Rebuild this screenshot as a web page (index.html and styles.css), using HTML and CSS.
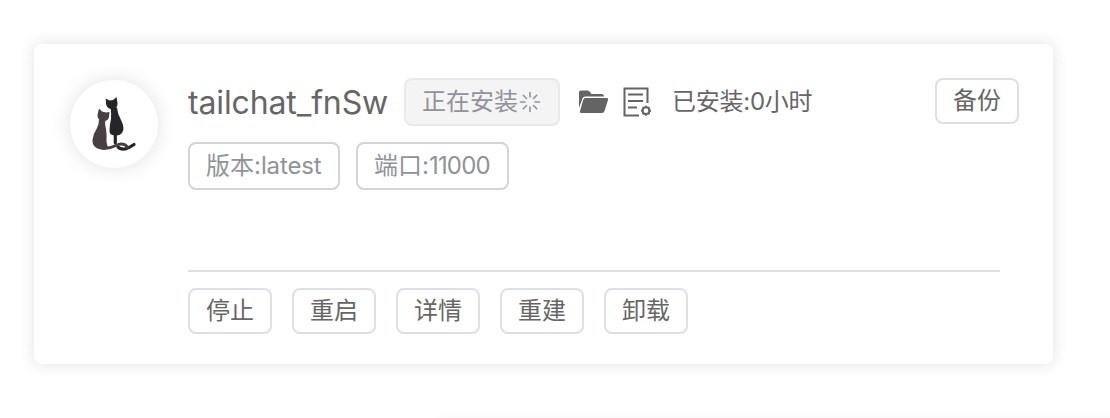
FILE: index.html
```html
<!DOCTYPE html>
<html lang="zh-CN">
<head>
<meta charset="utf-8">
<title>tailchat_fnSw</title>
<link rel="stylesheet" href="styles.css">
</head>
<body>
<main class="page">
  <article class="card">
    <div class="avatar">
      <svg width="48" height="60" viewBox="0 0 48 60">
        <g fill="#24262a">
          <path d="M15.700 4.500L19.500 6.500L23 6L26.500 3L27.500 9Q28 14 23 15Q17 15.500 16 10Z"/>
          <path d="M20.500 13.500L27 13.500Q27.500 20 31 26Q35 34 32.500 38Q30.500 42 24.500 41.500Q19.500 41 19.500 37Q19.500 31 21 25Q21.500 19 20.500 13.500Z"/>
        </g>
        <path d="M25.300 39V49M28 53Q30 55.500 35 55Q39 54 44 50.500" fill="none" stroke="#24262a" stroke-width="3.200" stroke-linecap="round"/>
        <g fill="#493f40">
          <path d="M9 14.500L12 17.500L16 18.500L19.500 18L19 23Q18 27.500 13 27Q7 26 7.500 21Z"/>
          <path d="M9 25L15.500 26Q14.500 29 16 35Q17 41 16.500 48L18 54Q13 57 7.500 54.500Q2 52 2.500 46Q3 40 7 34Q9 30 9 25Z"/>
        </g>
        <path d="M14 54.500Q20 54.500 26 51.500Q33 48 37.500 53" fill="none" stroke="#493f40" stroke-width="3" stroke-linecap="round"/>
      </svg>
    </div>
    <section class="content">
      <header class="head">
        <h1 class="name">tailchat_fnSw</h1>
        <span class="status">正在安装<svg class="spinner" width="22" height="22" viewBox="0 0 22 22" fill="none" stroke="currentColor" stroke-width="1.600" stroke-linecap="round"><path d="M11 1.500V6M11 16V20.500M1.500 11H6M16 11H20.500M4.300 4.300L7.500 7.500M14.500 14.500L17.700 17.700M4.300 17.700L7.500 14.500M14.500 7.500L17.700 4.300"/></svg></span>
        <svg class="folder" width="30" height="26" viewBox="0 0 30 26" fill="#646464"><path d="M0 19V3Q0 1.500 2 1.500H8.500Q10 1.500 11 3L12.500 5H22.500Q25 5 25 7.500H6Q4.200 7.500 3.500 9.500Z"/><path d="M6.500 9H27.500Q29.700 9 29 11L25.500 22Q25 24 23 24H2Q.5 24 1 22L4.200 11Q4.800 9 6.500 9Z"/></svg>
        <svg class="log" width="30" height="30" viewBox="0 0 30 30" fill="none" stroke="#646464" stroke-width="2"><path d="M16 28.500H1.500V1.500H24.500V16M5 7.500H20M5 14H20M5 20.500H14"/><circle cx="23" cy="23.700" r="3.400"/><path stroke-width="2" d="M23 18.700V20M23 27.200V28.700M18 23.700H19.300M26.700 23.700H28M19.500 20.200L20.500 21.200M25.500 26.200L26.500 27.200M19.500 27.200L20.500 26.200M25.500 21.200L26.500 20.200"/></svg>
        <span class="elapsed">已安装:0小时</span>
        <button class="btn backup">备份</button>
      </header>
      <div class="tags">
        <span class="tag version">版本:<span class="latin">latest</span></span>
        <span class="tag port">端口:<span class="digits">11000</span></span>
      </div>
      <footer class="actions">
        <button class="btn">停止</button>
        <button class="btn">重启</button>
        <button class="btn">详情</button>
        <button class="btn">重建</button>
        <button class="btn">卸载</button>
      </footer>
    </section>
  </article>
  <div class="next-card"></div>
</main>
</body>
</html>
```
FILE: styles.css
```css
* { box-sizing: border-box; }
body {
  margin: 0;
  overflow: hidden;
  background: #fff;
  color: #666;
  font: 24px/36px Inter, "Noto Sans CJK SC", sans-serif;
}
.page { height: 418px; padding: 44px 57px 0 34px; overflow: hidden; }
.card {
  display: flex;
  gap: 30px;
  height: 320px;
  padding: 34px 34px 30px 36px;
  border-radius: 8px;
  background: #fff;
  box-shadow: 0 0 16px rgba(0, 0, 0, .12);
}
.avatar {
  display: flex;
  flex: none;
  align-items: center;
  justify-content: center;
  width: 88px;
  height: 88px;
  margin-top: 2px;
  border-radius: 50%;
  box-shadow: 0 0 20px rgba(0, 0, 0, .12);
}
.content { display: flex; flex: 1; flex-direction: column; min-width: 0; }
.head { display: flex; height: 48px; white-space: nowrap; }
.name {
  width: 200px;
  margin: 0 16px 0 0;
  font-size: 32px;
  font-weight: 400;
  line-height: 49px;
  letter-spacing: -.13px;
}
.status, .tag {
  display: flex;
  align-items: center;
  height: 48px;
  padding: 0 16px;
  border: 2px solid #d3d4d6;
  border-radius: 8px;
  color: #909399;
  white-space: nowrap;
}
.status { width: 156px; border-color: #e9e9eb; background: #f4f4f4; }
.spinner { flex: none; margin: 0 0 0 1px; }
.folder { flex: none; margin: 11px 0 0 19px; }
.log { flex: none; margin: 9px 0 0 14px; }
.elapsed { margin: 6px 0 0 19px; letter-spacing: -.25px; }
.btn {
  width: 84px;
  height: 46px;
  padding: 0;
  border: 2px solid #dcdfe6;
  border-radius: 8px;
  background: #fff;
  color: #666;
  font: inherit;
}
.backup { margin-left: auto; }
.tags { display: flex; gap: 16px; margin-top: 16px; }
.version { width: 152px; }
.port { width: 153px; }
.latin { letter-spacing: -.15px; }
.digits { letter-spacing: -.8px; }
.actions {
  display: flex;
  gap: 20px;
  width: 812px;
  margin-top: auto;
  padding-top: 16px;
  border-top: 2px solid #dcdfe6;
}
.next-card {
  height: 40px;
  margin: 62px -80px 0 400px;
  border-radius: 8px;
  box-shadow: 0 0 16px rgba(0, 0, 0, .12);
}
```
